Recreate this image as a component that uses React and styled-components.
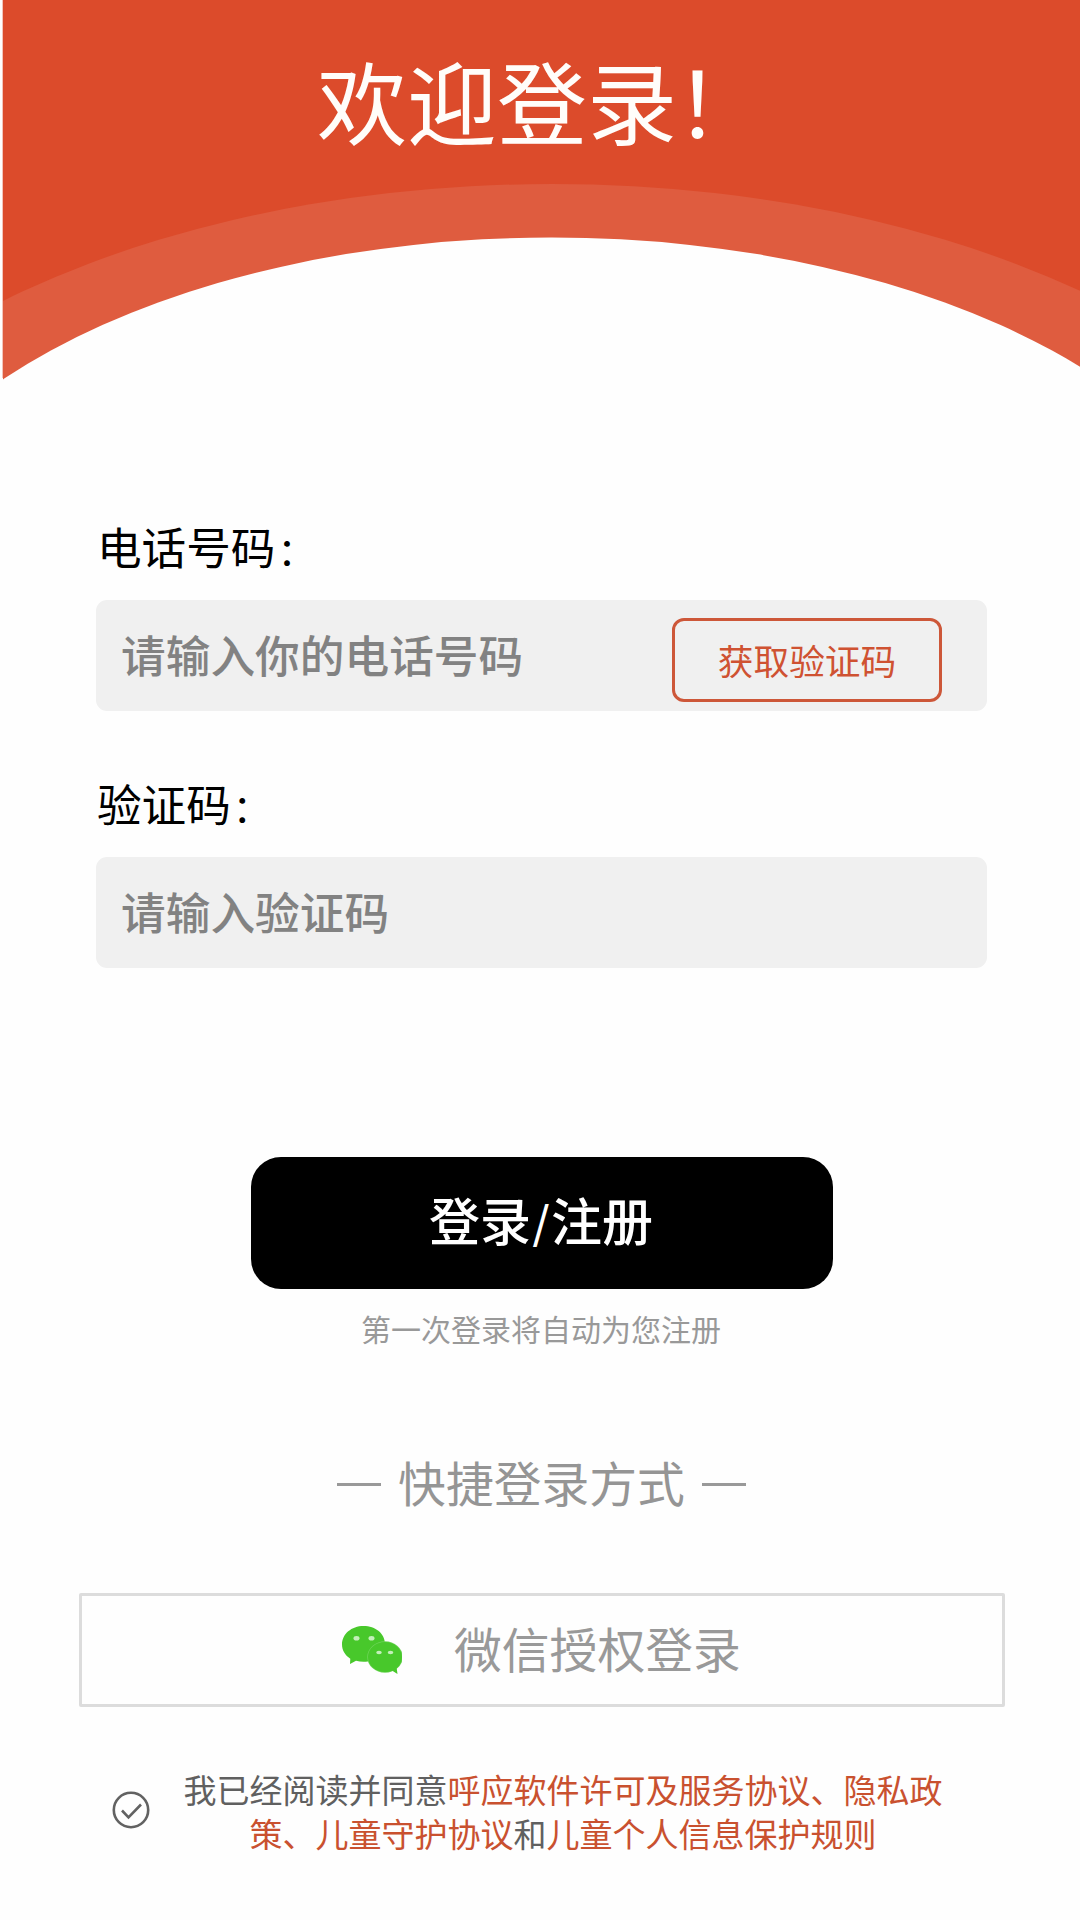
import React, { useState } from "react";
import styled, { createGlobalStyle } from "styled-components";

const App = () => {
  const [isAgreed, setIsAgreed] = useState(true);

  const toggleAgree = () => {
    setIsAgreed(!isAgreed);
  };

  return (
    <>
      <GlobalStyle />
      <Page>
        <Header>
          <Wave viewBox="3 0 1077 400">
            <rect x="3" y="0" width="1077" height="400" fill="#dc4b2b" />
            <ellipse cx="552" cy="657" rx="834" ry="473" fill="#df5c3f" />
            <ellipse cx="551.500" cy="623.500" rx="708" ry="386" fill="#fefefe" />
          </Wave>
          <Title>
            欢迎登录<Mark>！</Mark>
          </Title>
        </Header>

        <Form>
          <Label>
            电话号码<Colon>：</Colon>
          </Label>
          <Field>
            <Placeholder>请输入你的电话号码</Placeholder>
            <CodeButton>获取验证码</CodeButton>
          </Field>
          <Label>
            验证码<Colon>：</Colon>
          </Label>
          <Field>
            <Placeholder>请输入验证码</Placeholder>
          </Field>
        </Form>

        <LoginButton>
          登录<Slash>/</Slash>注册
        </LoginButton>
        <Hint>第一次登录将自动为您注册</Hint>

        <Quick>
          <Dash />
          <QuickText>快捷登录方式</QuickText>
          <Dash />
        </Quick>

        <WechatButton>
          <WechatIcon viewBox="0 0 60 48">
            <path
              d="M21.500 0C9.500 0 0 8 0 18.500c0 6 3.200 10.800 8.300 14.200L8 38l6-3.200c2.500.7 5 1 7.500 1C33.500 35.800 43 28.500 43 18S33.500 0 21.500 0z"
              fill="#48c82b"
            />
            <ellipse cx="43" cy="31" rx="17.800" ry="15.700" fill="#6fd45a" />
            <path
              d="M43 16c-9.500 0-17 6.700-17 15s7.500 15 17 15c2.700 0 5-.5 7.300-1.300L55.500 48l-.8-5.700C58 39.500 60 35.500 60 31c0-8.300-7.500-15-17-15z"
              fill="#48c82b"
            />
            <ellipse cx="14.500" cy="12.300" rx="3" ry="2.300" fill="#c4efba" />
            <ellipse cx="29.500" cy="12.300" rx="3" ry="2.300" fill="#c4efba" />
            <ellipse cx="37" cy="26.500" rx="2.800" ry="1.700" fill="#c4efba" />
            <ellipse cx="48.500" cy="26.500" rx="2.800" ry="1.700" fill="#c4efba" />
          </WechatIcon>
          <WechatText>微信授权登录</WechatText>
        </WechatButton>

        <Agreement>
          <Check viewBox="0 0 38 38" onClick={toggleAgree}>
            <circle cx="19" cy="19" r="17.200" />
            {isAgreed ? <path d="M10 19.500l6.500 6.800L29 13.500" /> : null}
          </Check>
          <Terms>
            <div>
              我已经阅读并同意<Link>呼应软件许可及服务协议、隐私政</Link>
            </div>
            <div>
              <Link>策、儿童守护协议</Link>和<Link>儿童个人信息保护规则</Link>
            </div>
          </Terms>
        </Agreement>
      </Page>
    </>
  );
};

const GlobalStyle = createGlobalStyle`
  * {
    box-sizing: border-box;
  }

  body {
    margin: 0;
    background: #fefefe;
  }
`;

let Page = styled.div`
  display: flex;
  flex-direction: column;
  width: 1080px;
  height: 1920px;
  overflow: hidden;
  background: #fefefe;
  font-family: "Noto Sans CJK SC", sans-serif;
  white-space: nowrap;
`;

let Header = styled.div`
  display: grid;
  height: 400px;
  background: linear-gradient(180deg, #f3c4ba 0 378px, #fefefe 378px) 2px 0 / 1px
    100% no-repeat;

  & > * {
    grid-area: 1 / 1;
  }
`;

let Wave = styled.svg`
  width: 1077px;
  height: 400px;
  margin-left: 3px;
`;

let Title = styled.div`
  z-index: 1;
  padding: 39px 0 0 317px;
  font-size: 90px;
  line-height: 120px;
  color: #fffdfa;
`;

let Mark = styled.span`
  margin-left: -2px;
`;

let Form = styled.div`
  display: flex;
  flex-direction: column;
  padding: 116px 93px 0 96px;
`;

let Label = styled.div`
  height: 84px;
  padding-left: 1px;
  font-size: 44.600px;
  line-height: 60px;
  color: #000;

  & ~ & {
    margin-top: -2px;
  }
`;

let Colon = styled.span`
  margin-left: 2px;
  font-size: 38px;
  line-height: 1;
`;

let Field = styled.div`
  display: flex;
  align-items: center;
  justify-content: space-between;
  height: 111px;
  margin-bottom: 64px;
  padding: 0 45px 0 25px;
  border-radius: 11px;
  background: #f0f0f0;
`;

let Placeholder = styled.div`
  padding-bottom: 4px;
  font-size: 44.700px;
  font-weight: 500;
  line-height: 60px;
  color: #828282;
`;

let CodeButton = styled.div`
  width: 270px;
  height: 84px;
  margin-top: 8px;
  border: 3px solid #cd5739;
  border-radius: 12px;
  font-size: 35.700px;
  line-height: 78px;
  text-align: center;
  color: #cf5232;
`;

let LoginButton = styled.div`
  width: 582px;
  height: 132px;
  margin: 125px 0 0 251px;
  padding-right: 2px;
  border-radius: 30px;
  background: #000;
  font-size: 51px;
  font-weight: 500;
  line-height: 125px;
  text-align: center;
  color: #fff;
`;

let Slash = styled.span`
  margin: 0 1.500px;
  font-size: 44px;
  line-height: 1;
  vertical-align: 2px;
`;

let Hint = styled.div`
  margin-top: 19px;
  padding-left: 2px;
  font-size: 30px;
  line-height: 40px;
  text-align: center;
  color: #999;
`;

let Quick = styled.div`
  display: flex;
  align-items: center;
  justify-content: center;
  gap: 17px;
  height: 60px;
  margin-top: 106px;
  padding-left: 3px;
`;

let Dash = styled.div`
  width: 44px;
  height: 3px;
  background: #999;
`;

let QuickText = styled.div`
  padding-bottom: 4px;
  font-size: 47.800px;
  line-height: 60px;
  color: #959595;
`;

let WechatButton = styled.div`
  display: flex;
  align-items: center;
  width: 926px;
  height: 114px;
  margin: 79px 0 0 79px;
  padding-left: 260px;
  border: 3px solid #dcdcdc;
  border-radius: 2px;
`;

let WechatIcon = styled.svg`
  width: 60px;
  height: 48px;
`;

let WechatText = styled.div`
  margin-left: 52px;
  padding-bottom: 4px;
  font-size: 47.800px;
  line-height: 60px;
  color: #999;
`;

let Agreement = styled.div`
  display: flex;
  align-items: center;
  height: 88px;
  margin-top: 60px;
  padding-left: 112px;
`;

let Check = styled.svg`
  width: 38px;
  height: 38px;
  margin-bottom: 3px;
  fill: none;
  stroke: #626262;
  stroke-width: 2.6;
`;

let Terms = styled.div`
  width: 760px;
  margin-left: 33px;
  font-size: 33px;
  line-height: 44px;
  text-align: center;
  color: #606060;
`;

let Link = styled.span`
  color: #c9512f;
`;

export default App;
